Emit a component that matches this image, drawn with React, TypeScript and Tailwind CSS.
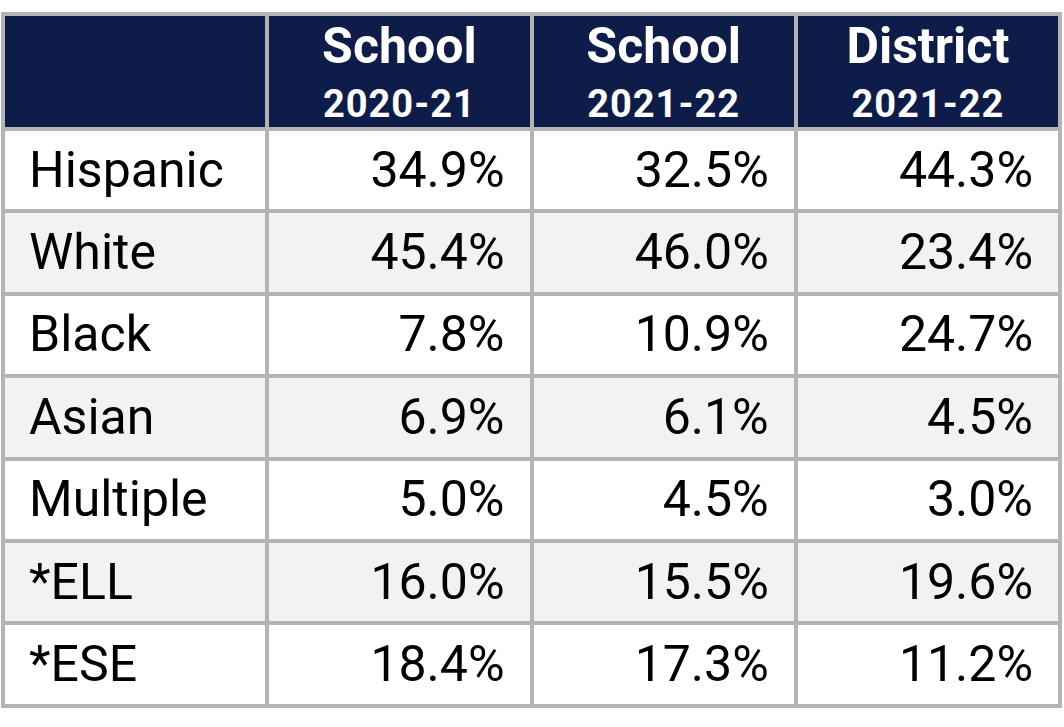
const headers = [
  { title: "School", year: "2020-21" },
  { title: "School", year: "2021-22" },
  { title: "District", year: "2021-22" },
];

const rows: [string, string, string, string][] = [
  ["Hispanic", "34.9%", "32.5%", "44.3%"],
  ["White", "45.4%", "46.0%", "23.4%"],
  ["Black", "7.8%", "10.9%", "24.7%"],
  ["Asian", "6.9%", "6.1%", "4.5%"],
  ["Multiple", "5.0%", "4.5%", "3.0%"],
  ["*ELL", "16.0%", "15.5%", "19.6%"],
  ["*ESE", "18.4%", "17.3%", "11.2%"],
];

export default function App() {
  return (
    <div className="w-[1064px] h-[727px] bg-white pt-[12px] pl-[1px] font-['Roboto',sans-serif]">
      <div className="grid w-[1061px] grid-cols-4 grid-rows-[111px_repeat(7,78.4px)] gap-[4px] border-[4px] border-[#b4b4b4] bg-[#b4b4b4]">
        <div className="bg-[#0e1c49]" />
        {headers.map((h, i) => (
          <div key={i} className="flex flex-col items-center bg-[#0e1c49] pt-[2px] font-bold text-white">
            <span className="text-[50px] leading-[56px]">{h.title}</span>
            <span className="mt-[8px] text-[38px] leading-[44px] tracking-[1px]">{h.year}</span>
          </div>
        ))}
        {rows.map((r, ri) => {
          const bg = ri % 2 === 1 ? "bg-[#f2f2f2]" : "bg-white";
          return [
            <div key={`${ri}-l`} className={`${bg} flex items-center pl-[24px] text-[50px] text-black`}>
              {r[0]}
            </div>,
            ...r.slice(1).map((v, ci) => (
              <div key={`${ri}-${ci}`} className={`${bg} flex items-center justify-end pr-[25px] text-[50px] text-black`}>
                {v}
              </div>
            )),
          ];
        })}
      </div>
    </div>
  );
}
